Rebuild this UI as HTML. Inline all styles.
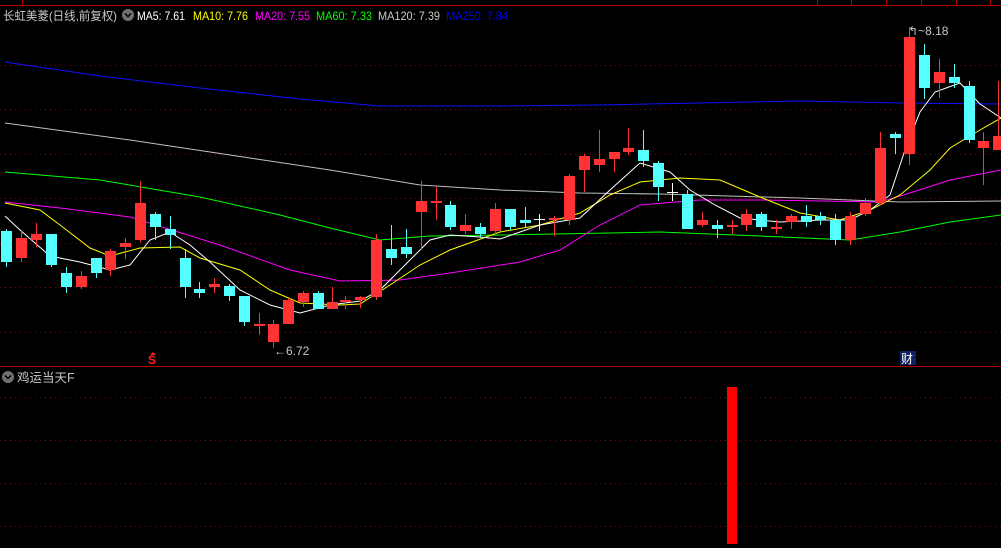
<!DOCTYPE html>
<html><head><meta charset="utf-8"><style>
html,body{margin:0;padding:0;background:#000;width:1001px;height:548px;overflow:hidden}
svg{display:block}
text{font-family:"Liberation Sans","Noto Sans CJK SC",sans-serif}
</style></head><body>
<svg width="1001" height="548" viewBox="0 0 1001 548" xmlns="http://www.w3.org/2000/svg">
<rect width="1001" height="548" fill="#000"/>
<g stroke="#b00000" stroke-width="1">
<line x1="0" y1="5.5" x2="1001" y2="5.5"/>
<line x1="22.5" y1="0" x2="22.5" y2="5"/>
<line x1="817.5" y1="0" x2="817.5" y2="5"/><line x1="851.5" y1="0" x2="851.5" y2="5"/>
<line x1="886.5" y1="0" x2="886.5" y2="5"/><line x1="921.5" y1="0" x2="921.5" y2="5"/>
<line x1="956.5" y1="0" x2="956.5" y2="5"/><line x1="990.5" y1="0" x2="990.5" y2="5"/>
<line x1="0" y1="366.5" x2="1001" y2="366.5"/>
</g>
<g stroke="#8a0000" stroke-width="1" stroke-dasharray="1,4">
<line x1="0" y1="65.5" x2="1001" y2="65.5"/><line x1="0" y1="109.5" x2="1001" y2="109.5"/>
<line x1="0" y1="154.5" x2="1001" y2="154.5"/><line x1="0" y1="198.5" x2="1001" y2="198.5"/>
<line x1="0" y1="243.5" x2="1001" y2="243.5"/><line x1="0" y1="287.5" x2="1001" y2="287.5"/>
<line x1="0" y1="332.5" x2="1001" y2="332.5"/>
<line x1="0" y1="397.5" x2="1001" y2="397.5"/><line x1="0" y1="440.5" x2="1001" y2="440.5"/>
<line x1="0" y1="483.5" x2="1001" y2="483.5"/><line x1="0" y1="526.5" x2="1001" y2="526.5"/>
</g>
<text x="3" y="20" font-size="12" fill="#c8c8c8" textLength="114" lengthAdjust="spacingAndGlyphs">长虹美菱(日线,前复权)</text>
<circle cx="128" cy="15" r="6" fill="#707070"/><path d="M125 13.5 L128 16.5 L131 13.5" stroke="#000" stroke-width="1.5" fill="none"/>
<g font-size="12" lengthAdjust="spacingAndGlyphs">
<text x="137" y="20" fill="#fff" textLength="48" lengthAdjust="spacingAndGlyphs">MA5: 7.61</text>
<text x="193" y="20" fill="#ffff00" textLength="55" lengthAdjust="spacingAndGlyphs">MA10: 7.76</text>
<text x="255" y="20" fill="#ff00ff" textLength="55" lengthAdjust="spacingAndGlyphs">MA20: 7.55</text>
<text x="316" y="20" fill="#00ff00" textLength="56" lengthAdjust="spacingAndGlyphs">MA60: 7.33</text>
<text x="378" y="20" fill="#c8c8c8" textLength="62" lengthAdjust="spacingAndGlyphs">MA120: 7.39</text>
<text x="446" y="20" fill="#0000ff" textLength="62" lengthAdjust="spacingAndGlyphs">MA250: 7.84</text>
</g>
<g fill="none" stroke-width="1">
<polyline stroke="#1010ff" points="5,62 100,76 200,88 300,99 380,106 500,106 600,105 700,103 800,101 900,103 1001,104"/>
<polyline stroke="#c0c0c0" points="5,123 130,140 230,155 330,170 420,185 500,190 580,193 660,194 800,198 900,202 1001,201"/>
<polyline stroke="#00ff00" points="5,172 100,180 200,197 280,215 330,228 380,240 430,236 500,235 660,232 760,236 850,240 900,232 950,222 1001,215"/>
<polyline stroke="#ff00ff" points="5,202 60,208 130,217 220,245 290,270 340,281 400,280 450,273 520,262 560,250 600,225 640,205 700,200 760,200 880,202 910,193 950,180 1001,170"/>
<polyline stroke="#ffff00" points="5,203 40,210 60,225 90,248 110,256 140,248 180,247 200,258 240,270 270,290 300,303 340,305 360,304 390,285 420,265 450,250 500,232 540,225 580,213 610,195 640,182 680,178 720,180 760,197 800,213 840,220 870,210 900,195 930,170 950,148 980,130 1001,118"/>
<polyline stroke="#ffffff" points="5,216 20,230 50,256 80,262 110,270 130,265 150,240 170,232 190,245 210,262 240,290 270,305 300,313 330,305 360,301 380,290 410,260 430,240 450,235 480,237 500,239 520,232 540,225 580,218 610,190 640,163 670,172 690,190 715,205 740,218 780,222 820,220 850,220 870,210 890,195 905,150 920,112 935,92 960,83 980,104 1001,118"/>
</g>
<g id="c"></g>
<text x="274" y="355" font-size="12" fill="#c8c8c8">←6.72</text>
<text x="908" y="35" font-size="12" fill="#c8c8c8">↰~8.18</text>
<text x="148" y="364" font-size="12" fill="#ff2020" font-weight="bold">S</text>
<path d="M150 355 L153 352 L156 355Z" fill="#ff2020"/>
<rect x="900" y="351" width="16" height="14" fill="#102060"/>
<text x="901" y="363" font-size="12" fill="#fff">财</text>
<circle cx="8" cy="377" r="6" fill="#707070"/><path d="M5 375.5 L8 378.5 L11 375.5" stroke="#000" stroke-width="1.5" fill="none"/>
<text x="17" y="382" font-size="12.5" fill="#c8c8c8">鸡运当天F</text>
<rect x="727" y="387" width="10" height="157" fill="#ff0000"/>
</svg>
<script>
var d=[[6,231,262,229,267,0],[21,238,258,230,262,1],[36,234,240,223,247,1],[51,234,265,234,267,0],[66,273,287,267,293,0],[81,276,287,271,289,1],[96,258,273,258,278,0],[110,251,270,249,276,1],[125,243,247,238,259,1],[140,203,240,181,242,1],[155,214,227,212,240,0],[170,229,235,216,249,0],[185,258,287,249,298,0],[199,289,293,282,298,0],[214,284,287,278,293,1],[229,286,296,284,301,0],[244,296,322,296,326,0],[259,324,326,313,335,1],[273,324,342,320,348,1],[288,300,324,298,324,1],[303,293,302,291,307,1],[318,293,309,291,309,0],[332,302,309,287,309,1],[345,300,302,296,309,1],[360,297,300,296,308,1],[376,240,297,234,300,1],[391,249,258,225,265,0],[406,247,254,229,258,0],[421,201,212,181,250,1],[436,201,203,187,220,1],[450,205,227,201,230,0],[465,225,231,214,234,1],[480,227,234,223,238,0],[495,209,231,203,234,1],[510,209,227,209,230,0],[525,220,223,207,227,0],[539,219,220,214,231,2],[554,218,220,216,236,1],[569,176,220,174,225,1],[584,156,170,154,192,1],[599,159,165,130,172,1],[614,152,159,152,172,1],[628,148,152,128,155,1],[643,150,161,130,167,0],[658,163,187,161,201,0],[672,192,193,183,201,2],[687,194,229,190,229,0],[702,220,225,212,227,1],[717,225,229,220,238,0],[732,225,227,220,234,1],[746,214,225,209,231,1],[761,214,227,212,231,0],[776,227,229,220,234,1],[791,216,222,214,229,1],[806,216,222,205,227,0],[820,216,220,212,225,0],[835,220,240,214,245,0],[850,216,240,212,245,1],[865,203,214,198,216,1],[880,148,203,132,205,1],[895,134,138,132,154,0],[909,37,154,27,165,1],[924,55,88,44,99,0],[939,72,83,59,98,1],[954,77,83,64,88,0],[969,86,140,81,143,0],[983,141,148,132,185,1],[998,136,150,81,150,1]];
var g=document.getElementById('c'),s='';
d.forEach(function(a){var col=a[5]==1?'#ff3333':a[5]==0?'#54ffff':'#ffffff';
s+='<line x1="'+(a[0]+.5)+'" y1="'+a[3]+'" x2="'+(a[0]+.5)+'" y2="'+a[4]+'" stroke="'+col+'"/>';
s+='<rect x="'+(a[0]-5)+'" y="'+a[1]+'" width="11" height="'+Math.max(1,a[2]-a[1])+'" fill="'+col+'"/>';});
g.innerHTML=s;
</script>
</body></html>
